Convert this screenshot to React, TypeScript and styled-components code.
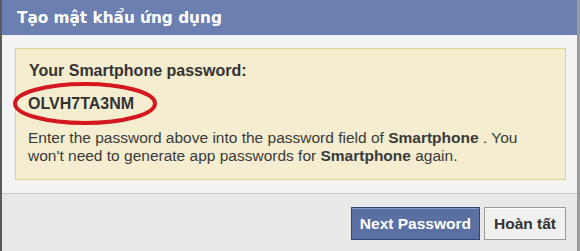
import React from "react";
import styled, { createGlobalStyle } from "styled-components";

const Global = createGlobalStyle`
  html, body { margin: 0; padding: 0; background: #ffffff; }
  body { font-family: "Liberation Sans", Arial, sans-serif; }
`;

const Dialog = styled.div`
  width: 580px;
  height: 251px;
  box-sizing: border-box;
  display: flex;
  flex-direction: column;
  border-left: 2px solid #5a5a5a;
  border-right: 3px solid #9a9a9a;
  overflow: hidden;
`;

const Header = styled.div`
  height: 35px;
  flex: none;
  background: #6b80b0;
  color: #ffffff;
  font-family: "DejaVu Sans", "Liberation Sans", sans-serif;
  font-weight: bold;
  font-size: 15.3px;
  display: flex;
  align-items: center;
  padding-left: 15px;
`;

const Body = styled.div`
  background: #f3f3f3;
  padding: 13px 11px 13px 13px;
  flex: none;
`;

const Notice = styled.div`
  height: 132px;
  box-sizing: border-box;
  background: #f4edd0;
  border: 1px solid #d9d68c;
  padding: 12px 14px 0 12px;
  color: #333333;
`;

const Label = styled.div`
  font-weight: bold;
  font-size: 16px;
  color: #333333;
  line-height: 20px;
  padding-left: 1px;
`;

const Password = styled.div`
  position: relative;
  font-weight: bold;
  font-size: 16px;
  color: #333333;
  line-height: 20px;
  margin-top: 13px;
`;

const Ring = styled.svg`
  position: absolute;
  left: -15px;
  top: -12px;
  width: 144px;
  height: 43px;
  pointer-events: none;
`;

const Text = styled.p`
  margin: 15px 0 0;
  font-size: 15.5px;
  line-height: 18px;
  color: #3a3a3a;
`;

const Footer = styled.div`
  flex: 1;
  background: #e8e8e8;
  border-top: 1px solid #c6c6c6;
  display: flex;
  justify-content: flex-end;
  align-items: flex-start;
  gap: 4px;
  padding: 13px 11px 0 0;
`;

const Button = styled.button<{ $primary?: boolean }>`
  height: 33px;
  box-sizing: border-box;
  padding: 0 ${(p) => (p.$primary ? "8px" : "9px")};
  font-family: "Liberation Sans", Arial, sans-serif;
  font-weight: bold;
  font-size: 15.5px;
  cursor: pointer;
  color: ${(p) => (p.$primary ? "#ffffff" : "#333333")};
  background: ${(p) => (p.$primary ? "#5a70a3" : "#f0f0f0")};
  border: 1px solid ${(p) => (p.$primary ? "#2e4577" : "#9a9a9a")};
  box-shadow: ${(p) => (p.$primary ? "inset 0 1px 0 #8a9cc4" : "inset 0 1px 0 #ffffff")};
`;

export default function App() {
  return (
    <>
      <Global />
      <Dialog>
        <Header>Tạo mật khẩu ứng dụng</Header>
        <Body>
          <Notice>
            <Label>Your Smartphone password:</Label>
            <Password>
              OLVH7TA3NM
              <Ring viewBox="0 0 144 43">
                <ellipse cx="72" cy="21.5" rx="70" ry="19.5" fill="none" stroke="#d51820" strokeWidth="4" />
              </Ring>
            </Password>
            <Text>
              Enter the password above into the password field of <b>Smartphone</b> . You
              won't need to generate app passwords for <b>Smartphone</b> again.
            </Text>
          </Notice>
        </Body>
        <Footer>
          <Button $primary>Next Password</Button>
          <Button>Hoàn tất</Button>
        </Footer>
      </Dialog>
    </>
  );
}
